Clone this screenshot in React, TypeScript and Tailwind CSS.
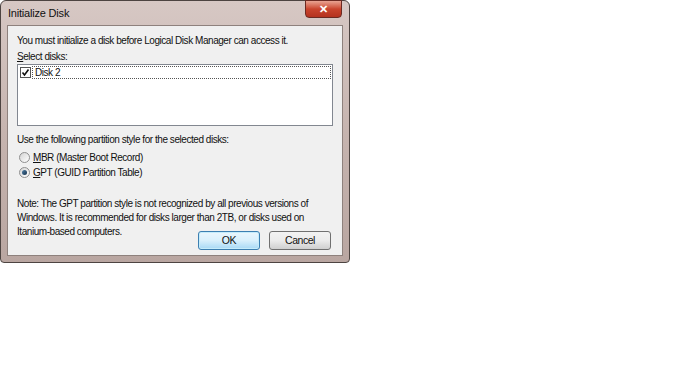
import React from 'react';

function Radio({ checked }: { checked?: boolean }) {
  return (
    <span className="inline-flex h-[11px] w-[11px] items-center justify-center rounded-full border border-[#8f8f8f] bg-gradient-to-br from-[#d4d4d4] to-white">
      {checked && <span className="h-[5px] w-[5px] rounded-full bg-gradient-to-br from-[#4f7fa6] to-[#16324d]" />}
    </span>
  );
}

export default function App() {
  return (
    <div className="relative h-[388px] w-[690px] bg-white" style={{ fontFamily: '"Liberation Sans", Arial, sans-serif' }}>
      <div className="flex h-[263px] w-[350px] flex-col rounded-t-[6px] rounded-b-[4px] border border-[#4d4441] bg-gradient-to-b from-[#d7c8c4] via-[#c6b4af] to-[#b9a6a1] px-[6px] pb-[6px]">
        <div className="relative flex h-[24px] shrink-0 items-center pl-[1px] text-[11px] tracking-[-0.2px] text-[#111]">
          Initialize Disk
          <div className="absolute right-[1px] top-[-1px] flex h-[18px] w-[37px] items-center justify-center rounded-b-[4px] border border-[#6b2a22] bg-gradient-to-b from-[#e8a392] via-[#c9442d] to-[#b4321f] text-[11px] font-bold text-white">
            ✕
          </div>
        </div>
        <div className="flex flex-1 flex-col border border-[#8e817d] bg-[#f0f0f0] px-[9px] pt-[8px] text-[10px] leading-[13px] tracking-[-0.45px] text-[#111]">
          <div>You must initialize a disk before Logical Disk Manager can access it.</div>
          <div className="mt-[3px]">
            <span className="underline">S</span>elect disks:
          </div>
          <div className="mt-[1px] h-[62px] border border-[#828790] bg-white p-[1px]">
            <div className="flex items-center">
              <span className="ml-[1px] flex h-[11px] w-[11px] items-center justify-center border border-[#555] bg-white">
                <svg width="9" height="9" viewBox="0 0 9 9">
                  <path d="M1.5 4.5 L3.5 7 L7.5 1.5" fill="none" stroke="#111" strokeWidth="1.6" />
                </svg>
              </span>
              <span className="ml-[1px] flex-1 border border-dotted border-[#555] pl-[2px] leading-[11px]">Disk 2</span>
            </div>
          </div>
          <div className="mt-[7px]">Use the following partition style for the selected disks:</div>
          <div className="mt-[5px] flex items-center gap-[3px] pl-[2px]">
            <Radio />
            <span>
              <span className="underline">M</span>BR (Master Boot Record)
            </span>
          </div>
          <div className="mt-[2px] flex items-center gap-[3px] pl-[2px]">
            <Radio checked />
            <span>
              <span className="underline">G</span>PT (GUID Partition Table)
            </span>
          </div>
          <div className="mt-[18px] leading-[14px]">
            <div>Note: The GPT partition style is not recognized by all previous versions of</div>
            <div>Windows. It is recommended for disks larger than 2TB, or disks used on</div>
          </div>
          <div className="flex items-start justify-between pr-[2px]">
            <span className="leading-[14px]">Itanium-based computers.</span>
            <div className="mt-[6px] flex gap-[9px]">
              <button className="h-[19px] w-[62px] rounded-[3px] border border-[#3c7fb1] bg-gradient-to-b from-[#eaf6fd] via-[#d9f0fc] to-[#a7d9f5] text-[10.5px] text-[#111] shadow-[inset_0_0_0_1px_#c5ecfb]">
                OK
              </button>
              <button className="h-[19px] w-[62px] rounded-[3px] border border-[#707070] bg-gradient-to-b from-[#f2f2f2] via-[#ebebeb] to-[#cfcfcf] text-[10.5px] text-[#111]">
                Cancel
              </button>
            </div>
          </div>
        </div>
      </div>
    </div>
  );
}
